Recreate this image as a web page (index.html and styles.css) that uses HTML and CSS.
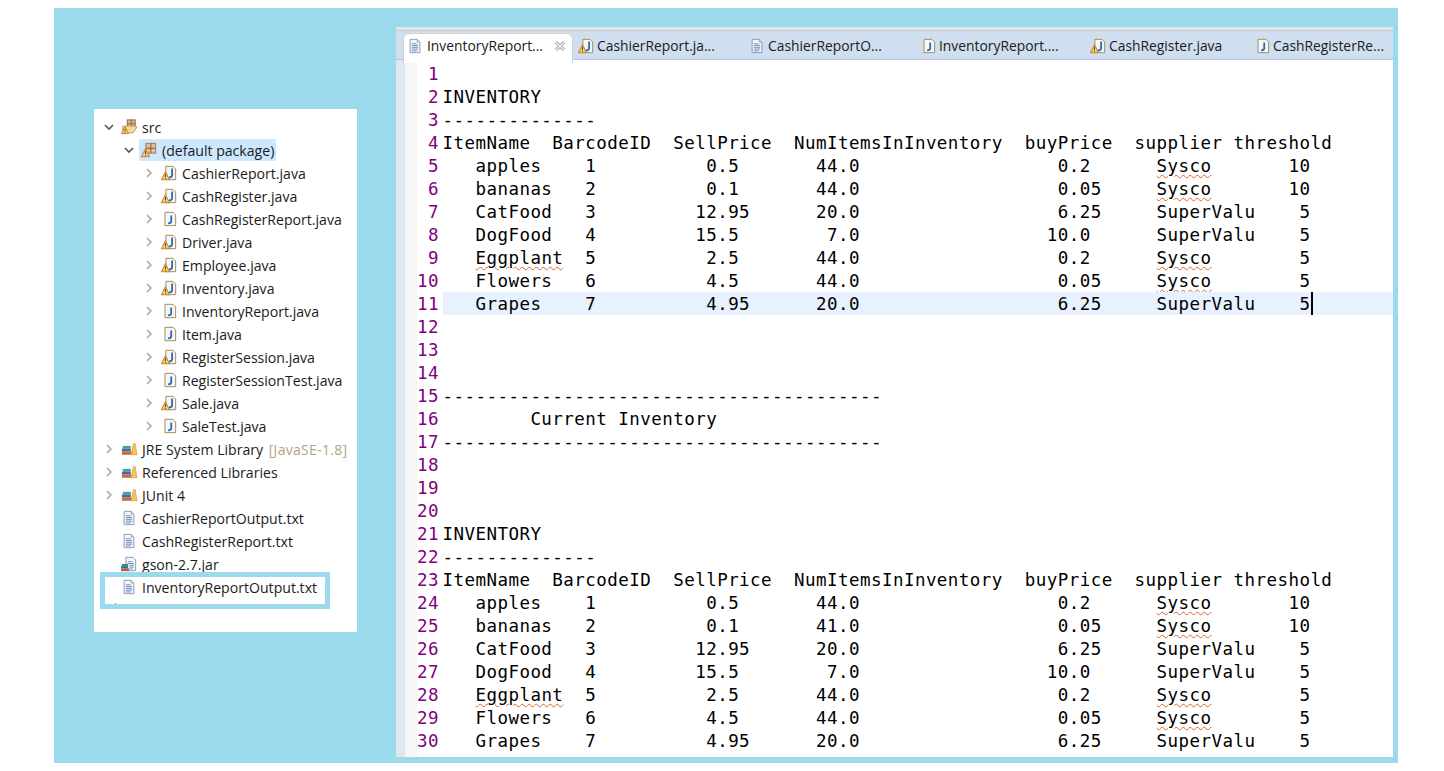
FILE: index.html
```html
<!DOCTYPE html>
<html lang="en">
<head>
<meta charset="utf-8">
<title>InventoryReportOutput.txt</title>
<link rel="stylesheet" href="styles.css">
</head>
<body>
<svg class="defs" xmlns="http://www.w3.org/2000/svg">
  <symbol id="java" viewBox="0 0 20 18">
    <path d="M6.5 1.5 H14.5 L17.5 4.5 V16.5 H6.5 Z" fill="#f3f7fb" stroke="#a98a4e" stroke-width="1.1"/>
    <path d="M13.5 4 V11.5 Q13.5 14 10 14" fill="none" stroke="#2f6aa8" stroke-width="2"/>
    <path d="M1.5 16.5 L6 7.5 L10.5 16.5 Z" fill="#f6cf7e" stroke="#c48a2e" stroke-width="1.2" stroke-linejoin="round"/>
    <path d="M6 10.2 V13.6 M6 14.6 V15.7" stroke="#5a3d10" stroke-width="1.1"/>
  </symbol>
  <symbol id="javaok" viewBox="0 0 20 18">
    <path d="M5.5 1.5 H14.5 L17.5 4.5 V16.5 H5.5 Z" fill="#f3f7fb" stroke="#a98a4e" stroke-width="1.1"/>
    <path d="M12.5 5 V11.5 Q12.5 13.8 9 13.8" fill="none" stroke="#2f6aa8" stroke-width="2"/>
  </symbol>
  <symbol id="txt" viewBox="0 0 20 18">
    <path d="M4.5 1.5 H12.5 L15.5 4.5 V16.5 H4.5 Z" fill="#f2f5fa" stroke="#8d9ab4" stroke-width="1.1"/>
    <path d="M12.5 1.5 V4.5 H15.5" fill="#e8dcc0" stroke="#b0a080"/>
    <path d="M6.5 6.5 H12 M6.5 8.5 H13.5 M6.5 10.5 H13.5 M6.5 12.5 H13.5 M6.5 14.5 H12" stroke="#5f86bd" stroke-width="1"/>
  </symbol>
  <symbol id="jar" viewBox="0 0 20 18">
    <path d="M6.5 1.5 H14.5 L17.5 4.5 V16.5 H6.5 Z" fill="#f2f5fa" stroke="#8d9ab4" stroke-width="1.1"/>
    <path d="M8.5 6.5 H14 M8.5 8.5 H15.5 M10.5 10.5 H15.5 M10.5 12.5 H15.5 M10.5 14.5 H14" stroke="#5f86bd"/>
    <rect x="2" y="9" width="7" height="2.4" fill="#3e8a78"/>
    <rect x="1" y="11.4" width="8" height="2.6" fill="#3f6aa5"/>
    <rect x="1" y="14" width="9" height="3" fill="#b8603a"/>
  </symbol>
  <symbol id="folder" viewBox="0 0 20 18">
    <rect x="8" y="1" width="9" height="9" fill="#d8b58c" stroke="#8d5a3c" stroke-width="1"/>
    <path d="M12.5 1 V10 M8 5.5 H17" stroke="#8d5a3c"/>
    <path d="M3 8 H17 L19 9 L15 15.5 H3 Z" fill="#f3d7a0" stroke="#c59a55" stroke-width="1"/>
    <path d="M1.5 16.5 L5.5 8.5 L9.5 16.5 Z" fill="#f6cf7e" stroke="#c48a2e" stroke-width="1.1" stroke-linejoin="round"/>
    <path d="M5.5 11 V14 M5.5 14.8 V15.8" stroke="#5a3d10"/>
  </symbol>
  <symbol id="pkg" viewBox="0 0 20 18">
    <rect x="6.5" y="1.5" width="11" height="11" fill="#e4c09c" stroke="#a5714f" stroke-width="1"/>
    <path d="M12 1.5 V12.5 M6.5 7 H17.5" stroke="#8d5a3c" stroke-width="1.2"/>
    <path d="M1.5 16.5 L6 7.5 L10.5 16.5 Z" fill="#f6cf7e" stroke="#c48a2e" stroke-width="1.2" stroke-linejoin="round"/>
    <path d="M6 10.2 V13.6 M6 14.6 V15.7" stroke="#5a3d10" stroke-width="1.1"/>
  </symbol>
  <symbol id="lib" viewBox="0 0 20 18">
    <rect x="3" y="5.5" width="9" height="3" fill="#46a08c"/>
    <rect x="2" y="8.5" width="10" height="3" fill="#3f6aa5"/>
    <rect x="2" y="11.5" width="11" height="4" fill="#c56c42"/>
    <path d="M12.5 15.5 L15 3 L17 3 L19 15.5 Z" fill="#f6c25c" stroke="#d09a35" stroke-width=".7"/>
  </symbol>
</svg>
<main class="stage">
  <aside class="tree">
    <div class="row l1"><svg class="chev" viewBox="0 0 18 18"><path d="M3 7 L7 11 L11 7" fill="none" stroke="#555" stroke-width="1.6"/></svg><svg class="ic"><use href="#folder"/></svg><span>src</span></div>
    <div class="row l2"><svg class="chev" viewBox="0 0 18 18"><path d="M3 7 L7 11 L11 7" fill="none" stroke="#555" stroke-width="1.6"/></svg><span class="sel"><svg class="ic"><use href="#pkg"/></svg><span>(default package)</span></span></div>
    <div class="row l3"><svg class="chev" viewBox="0 0 18 18"><path d="M5 5 L9 9 L5 13" fill="none" stroke="#aaa" stroke-width="1.6"/></svg><svg class="ic"><use href="#java"/></svg><span>CashierReport.java</span></div>
    <div class="row l3"><svg class="chev" viewBox="0 0 18 18"><path d="M5 5 L9 9 L5 13" fill="none" stroke="#aaa" stroke-width="1.6"/></svg><svg class="ic"><use href="#java"/></svg><span>CashRegister.java</span></div>
    <div class="row l3"><svg class="chev" viewBox="0 0 18 18"><path d="M5 5 L9 9 L5 13" fill="none" stroke="#aaa" stroke-width="1.6"/></svg><svg class="ic"><use href="#javaok"/></svg><span>CashRegisterReport.java</span></div>
    <div class="row l3"><svg class="chev" viewBox="0 0 18 18"><path d="M5 5 L9 9 L5 13" fill="none" stroke="#aaa" stroke-width="1.6"/></svg><svg class="ic"><use href="#java"/></svg><span>Driver.java</span></div>
    <div class="row l3"><svg class="chev" viewBox="0 0 18 18"><path d="M5 5 L9 9 L5 13" fill="none" stroke="#aaa" stroke-width="1.6"/></svg><svg class="ic"><use href="#java"/></svg><span>Employee.java</span></div>
    <div class="row l3"><svg class="chev" viewBox="0 0 18 18"><path d="M5 5 L9 9 L5 13" fill="none" stroke="#aaa" stroke-width="1.6"/></svg><svg class="ic"><use href="#java"/></svg><span>Inventory.java</span></div>
    <div class="row l3"><svg class="chev" viewBox="0 0 18 18"><path d="M5 5 L9 9 L5 13" fill="none" stroke="#aaa" stroke-width="1.6"/></svg><svg class="ic"><use href="#javaok"/></svg><span>InventoryReport.java</span></div>
    <div class="row l3"><svg class="chev" viewBox="0 0 18 18"><path d="M5 5 L9 9 L5 13" fill="none" stroke="#aaa" stroke-width="1.6"/></svg><svg class="ic"><use href="#javaok"/></svg><span>Item.java</span></div>
    <div class="row l3"><svg class="chev" viewBox="0 0 18 18"><path d="M5 5 L9 9 L5 13" fill="none" stroke="#aaa" stroke-width="1.6"/></svg><svg class="ic"><use href="#java"/></svg><span>RegisterSession.java</span></div>
    <div class="row l3"><svg class="chev" viewBox="0 0 18 18"><path d="M5 5 L9 9 L5 13" fill="none" stroke="#aaa" stroke-width="1.6"/></svg><svg class="ic"><use href="#javaok"/></svg><span>RegisterSessionTest.java</span></div>
    <div class="row l3"><svg class="chev" viewBox="0 0 18 18"><path d="M5 5 L9 9 L5 13" fill="none" stroke="#aaa" stroke-width="1.6"/></svg><svg class="ic"><use href="#java"/></svg><span>Sale.java</span></div>
    <div class="row l3"><svg class="chev" viewBox="0 0 18 18"><path d="M5 5 L9 9 L5 13" fill="none" stroke="#aaa" stroke-width="1.6"/></svg><svg class="ic"><use href="#javaok"/></svg><span>SaleTest.java</span></div>
    <div class="row l1"><svg class="chev" viewBox="0 0 18 18"><path d="M5 5 L9 9 L5 13" fill="none" stroke="#aaa" stroke-width="1.6"/></svg><svg class="ic"><use href="#lib"/></svg><span>JRE System Library <span class="deco">[JavaSE-1.8]</span></span></div>
    <div class="row l1"><svg class="chev" viewBox="0 0 18 18"><path d="M5 5 L9 9 L5 13" fill="none" stroke="#aaa" stroke-width="1.6"/></svg><svg class="ic"><use href="#lib"/></svg><span>Referenced Libraries</span></div>
    <div class="row l1"><svg class="chev" viewBox="0 0 18 18"><path d="M5 5 L9 9 L5 13" fill="none" stroke="#aaa" stroke-width="1.6"/></svg><svg class="ic"><use href="#lib"/></svg><span>JUnit 4</span></div>
    <div class="row l1"><span class="chev"></span><svg class="ic"><use href="#txt"/></svg><span>CashierReportOutput.txt</span></div>
    <div class="row l1"><span class="chev"></span><svg class="ic"><use href="#txt"/></svg><span>CashRegisterReport.txt</span></div>
    <div class="row l1"><span class="chev"></span><svg class="ic"><use href="#jar"/></svg><span>gson-2.7.jar</span></div>
    <div class="row l1"><span class="chev"></span><svg class="ic"><use href="#txt"/></svg><span>InventoryReportOutput.txt</span></div>
    <div class="callout"></div>
    <div class="speck"></div>
  </aside>
  <section class="editor">
    <nav class="tabs">
      <div class="tab active"><svg class="ic"><use href="#txt"/></svg><span class="tab-name">InventoryReport...</span><svg class="close" viewBox="0 0 12 12"><path d="M2 2 L10 10 M10 2 L2 10" stroke="#8a8a8a" stroke-width="3"/><path d="M2 2 L10 10 M10 2 L2 10" stroke="#fff" stroke-width="1.4"/></svg></div>
      <div class="tab"><svg class="ic"><use href="#java"/></svg><span class="tab-name">CashierReport.ja...</span></div>
      <div class="tab"><svg class="ic"><use href="#txt"/></svg><span class="tab-name">CashierReportO...</span></div>
      <div class="tab mid"><svg class="ic"><use href="#javaok"/></svg><span class="tab-name">InventoryReport....</span></div>
      <div class="tab short"><svg class="ic"><use href="#java"/></svg><span class="tab-name">CashRegister.java</span></div>
      <div class="tab"><svg class="ic"><use href="#javaok"/></svg><span class="tab-name">CashRegisterRe...</span></div>
    </nav>
    <div class="body">
      <div class="strip"></div>
      <div class="lines">
        <div class="ln"><span class="no">1</span><span class="tx"></span></div>
        <div class="ln"><span class="no">2</span><span class="tx">INVENTORY</span></div>
        <div class="ln"><span class="no">3</span><span class="tx">--------------</span></div>
        <div class="ln"><span class="no">4</span><span class="tx">ItemName  BarcodeID  SellPrice  NumItemsInInventory  buyPrice  supplier threshold</span></div>
        <div class="ln"><span class="no">5</span><span class="tx">   apples    1          0.5       44.0                  0.2      <span class="sq">Sysco</span>       10</span></div>
        <div class="ln"><span class="no">6</span><span class="tx">   bananas   2          0.1       44.0                  0.05     <span class="sq">Sysco</span>       10</span></div>
        <div class="ln"><span class="no">7</span><span class="tx">   CatFood   3         12.95      20.0                  6.25     SuperValu    5</span></div>
        <div class="ln"><span class="no">8</span><span class="tx">   DogFood   4         15.5        7.0                 10.0      SuperValu    5</span></div>
        <div class="ln"><span class="no">9</span><span class="tx">   <span class="sq">Eggplant</span>  5          2.5       44.0                  0.2      <span class="sq">Sysco</span>        5</span></div>
        <div class="ln"><span class="no">10</span><span class="tx">   Flowers   6          4.5       44.0                  0.05     <span class="sq">Sysco</span>        5</span></div>
        <div class="ln cur"><span class="no">11</span><span class="tx">   Grapes    7          4.95      20.0                  6.25     SuperValu    5<span class="caret"></span></span></div>
        <div class="ln"><span class="no">12</span><span class="tx"></span></div>
        <div class="ln"><span class="no">13</span><span class="tx"></span></div>
        <div class="ln"><span class="no">14</span><span class="tx"></span></div>
        <div class="ln"><span class="no">15</span><span class="tx">----------------------------------------</span></div>
        <div class="ln"><span class="no">16</span><span class="tx">        Current Inventory</span></div>
        <div class="ln"><span class="no">17</span><span class="tx">----------------------------------------</span></div>
        <div class="ln"><span class="no">18</span><span class="tx"></span></div>
        <div class="ln"><span class="no">19</span><span class="tx"></span></div>
        <div class="ln"><span class="no">20</span><span class="tx"></span></div>
        <div class="ln"><span class="no">21</span><span class="tx">INVENTORY</span></div>
        <div class="ln"><span class="no">22</span><span class="tx">--------------</span></div>
        <div class="ln"><span class="no">23</span><span class="tx">ItemName  BarcodeID  SellPrice  NumItemsInInventory  buyPrice  supplier threshold</span></div>
        <div class="ln"><span class="no">24</span><span class="tx">   apples    1          0.5       44.0                  0.2      <span class="sq">Sysco</span>       10</span></div>
        <div class="ln"><span class="no">25</span><span class="tx">   bananas   2          0.1       41.0                  0.05     <span class="sq">Sysco</span>       10</span></div>
        <div class="ln"><span class="no">26</span><span class="tx">   CatFood   3         12.95      20.0                  6.25     SuperValu    5</span></div>
        <div class="ln"><span class="no">27</span><span class="tx">   DogFood   4         15.5        7.0                 10.0      SuperValu    5</span></div>
        <div class="ln"><span class="no">28</span><span class="tx">   <span class="sq">Eggplant</span>  5          2.5       44.0                  0.2      <span class="sq">Sysco</span>        5</span></div>
        <div class="ln"><span class="no">29</span><span class="tx">   Flowers   6          4.5       44.0                  0.05     <span class="sq">Sysco</span>        5</span></div>
        <div class="ln"><span class="no">30</span><span class="tx">   Grapes    7          4.95      20.0                  6.25     SuperValu    5</span></div>
      </div>
    </div>
  </section>
</main>
</body>
</html>
```
FILE: styles.css
```css
* { box-sizing: border-box; }
html, body { margin: 0; padding: 0; background: #fff; }
body { padding: 8px 46px 8px 54px; overflow: hidden; height: 771px; }
.defs { display: none; }

.stage {
  display: flex;
  align-items: flex-start;
  width: 1344px;
  height: 755px;
  background: #9bd9ec;
  font-family: "Open Sans", "Noto Sans", sans-serif;
  color: #1b1b22;
}

/* project tree */
.tree {
  position: relative;
  width: 263px;
  height: 523px;
  margin: 101px 0 0 40px;
  padding-top: 7px;
  background: #fff;
  font-size: 14.1px;
}
.row { display: flex; align-items: center; height: 23px; padding-bottom: 1px; white-space: nowrap; }
.l1 { padding-left: 8px; }
.l2 { padding-left: 28px; }
.l3 { padding-left: 48px; }
.chev { flex: none; width: 18px; height: 18px; }
.ic { flex: none; width: 18px; height: 16px; margin-right: 4px; }
.sel { display: flex; align-items: center; height: 22px; margin-left: -1px; padding: 0 2px 0 1px; background: #cce8ff; }
.deco { margin-left: 2px; letter-spacing: 0.25px; color: #b3a57f; }
.callout {
  position: absolute;
  left: 6px;
  top: 463px;
  width: 230px;
  height: 37px;
  border: 5px solid #9bd9ec;
}
.speck { position: absolute; left: 21px; top: 494px; width: 1px; height: 1px; background: #6a7a8a; }

/* editor */
.editor {
  display: flex;
  flex-direction: column;
  width: 997px;
  height: 730px;
  margin: 19px 0 0 39px;
  background: #fff;
}
.tabs {
  display: flex;
  flex: none;
  height: 33px;
  padding: 4px 0 0 7px;
  background: #cfdfef;
  border-top: 3px solid #dfe5ec;
  border-bottom: 1px solid #b9c0d8;
  box-shadow: inset 0 1px 0 #c8c8c8;
  font-size: 13.85px;
}
.tab { display: flex; align-items: center; flex: none; width: 171px; height: 29px; padding: 0 0 6px 4px; white-space: nowrap; }
.tab .ic { margin-right: 2px; }
.tab.mid { width: 170px; }
.tab.short { width: 164px; }
.tab.active {
  position: relative;
  width: 170px;
  margin-top: -1px;
  height: 30px;
  padding-left: 2px;
  background: #fff;
  border: 1px solid #d0d0d0;
  border-bottom: 0;
  border-radius: 6px 6px 0 0;
}
.tab.active .ic { margin-right: 3px; }
.close { position: absolute; right: 6px; top: 6px; width: 12px; height: 12px; }

.body { display: flex; flex: 1; min-height: 0; padding-top: 2px; background: linear-gradient(to right, #dfe7f0 9px, #fff 9px); }
.strip { flex: none; width: 12px; margin-left: 9px; margin-top: -2px; background: #f6f6f6; }
.lines { flex: 1; min-width: 0; }
.ln {
  display: flex;
  height: 23px;
  font-family: "DejaVu Sans Mono", "Liberation Mono", monospace;
  font-size: 17.5px;
  line-height: 25px;
  letter-spacing: 0.45px;
  color: #000;
}
.no { flex: none; width: 22px; margin-right: 3.5px; text-align: right; color: #800080; white-space: nowrap; }
.tx { flex: 1; white-space: pre; }
.cur .tx { background: #e8f2fe; }
.sq { text-decoration: underline wavy #e0622f 1px; text-underline-offset: 2px; }
.caret { display: inline-block; width: 2px; height: 23px; margin-left: 1px; vertical-align: top; background: #000; }
```
